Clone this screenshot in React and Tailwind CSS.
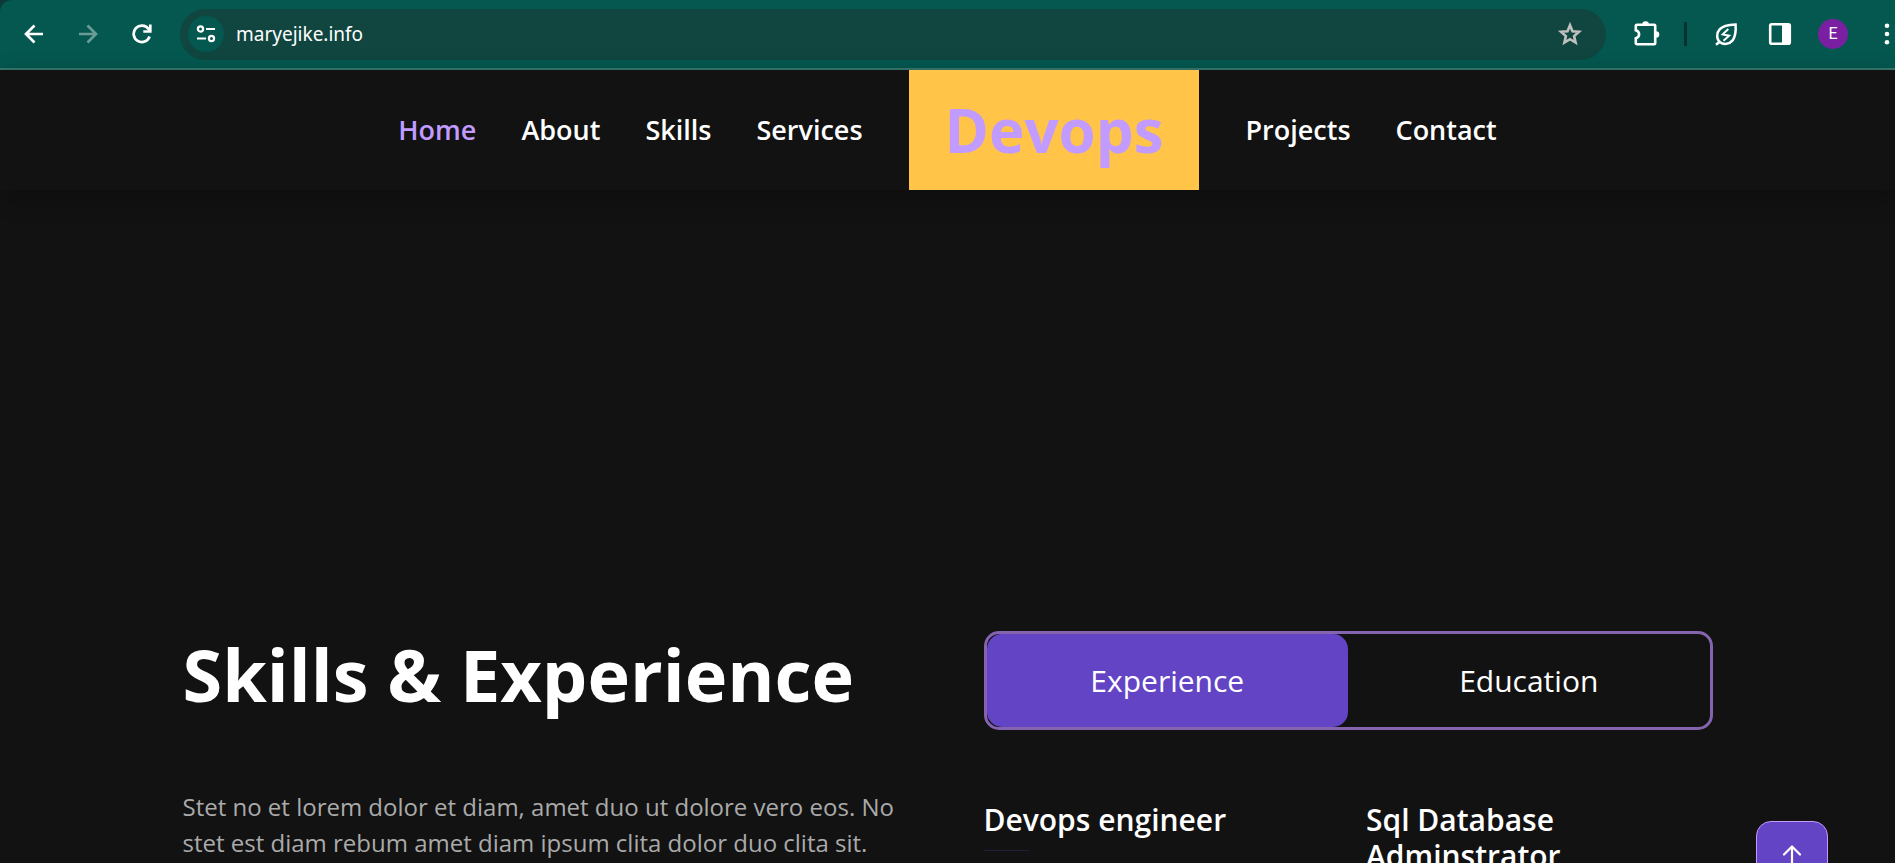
import React, { useState } from "react";

const leftLinks = ["Home", "About", "Skills", "Services"];
const rightLinks = ["Projects", "Contact"];

function IconButton({ label, className = "", children }) {
  return (
    <button type="button" aria-label={label} className={`flex h-9 w-9 shrink-0 items-center justify-center ${className}`}>
      {children}
    </button>
  );
}

function BrowserBar() {
  return (
    <div className="shrink-0 bg-[#0b3a38]">
      <div className="flex h-[70px] items-center rounded-tl-xl border-b-2 border-[#37786f] bg-[#045850] pl-4 text-white">
        <div className="flex shrink-0 gap-[18px]">
          <IconButton label="Back">
            <svg width="20" height="20" viewBox="0 0 20 20" fill="none" stroke="currentColor" strokeWidth="2.7">
              <path d="M19 10H2.5M10.5 1.5L2 10l8.500 8.500" />
            </svg>
          </IconButton>
          <IconButton label="Forward" className="text-[#6a9c96]">
            <svg width="20" height="20" viewBox="0 0 20 20" fill="none" stroke="currentColor" strokeWidth="2.7">
              <path d="M1 10h16.500M9.500 1.500L18 10l-8.500 8.500" />
            </svg>
          </IconButton>
          <IconButton label="Reload">
            <svg width="20" height="20" viewBox="0 0 20 20" fill="none" stroke="currentColor" strokeWidth="2.7">
              <path d="M17.600 12.500A8.200 8.200 0 1 1 16.500 5L18 7" />
              <path d="M18.300 0.500v7h-7" />
            </svg>
          </IconButton>
        </div>
        <div className="ml-5 flex h-[51px] min-w-0 flex-1 items-center rounded-full bg-[#10463f] pr-[18px] pl-2">
          <button
            type="button"
            aria-label="View site information"
            className="flex h-9 w-9 shrink-0 items-center justify-center rounded-full bg-[#045850]"
          >
            <svg width="20" height="18" viewBox="0 0 20 18" fill="none" stroke="currentColor" strokeWidth="2.200">
              <circle cx="4.500" cy="4" r="2.600" />
              <path d="M10 4h9M1 13.500h9" />
              <circle cx="15.500" cy="13.500" r="2.600" />
            </svg>
          </button>
          <input
            aria-label="Address"
            defaultValue="maryejike.info"
            className="ml-3 min-w-0 flex-1 bg-transparent font-['Noto_Sans',sans-serif] text-[19px] leading-7 outline-none"
          />
          <IconButton label="Bookmark this tab" className="text-[#c0c0c0]">
            <svg width="26" height="26" viewBox="0 0 26 26" fill="none" stroke="currentColor" strokeWidth="2.600">
              <path d="M13 4.200l2.500 6 6.500.6-4.900 4.300 1.500 6.500L13 18.200l-5.600 3.400 1.500-6.500L4 10.800l6.500-.6z" />
            </svg>
          </IconButton>
        </div>
        <div className="flex shrink-0 items-center pl-[22px]">
          <IconButton label="Extensions">
            <svg width="28" height="28" viewBox="0 0 28 28" fill="currentColor">
              <path
                d="M5 4.800h17a1.200 1.200 0 0 1 1.200 1.200v17a1.200 1.200 0 0 1-1.200 1.200H5A1.200 1.200 0 0 1 3.800 23v-4.700c4.400-1.300 4.400-6.800 0-8.100V6A1.200 1.200 0 0 1 5 4.800z"
                fill="none"
                stroke="currentColor"
                strokeWidth="2.600"
              />
              <path d="M10.300 4.500a3.300 3.300 0 0 1 6.600 0zM24 11.200a3.300 3.300 0 0 1 0 6.600z" />
            </svg>
          </IconButton>
          <span className="mr-[21px] ml-5 h-6 w-[3px] bg-[#04332f]" />
          <IconButton label="Energy saver">
            <svg width="26" height="26" viewBox="0 0 26 26" fill="none" stroke="currentColor" strokeWidth="2.500">
              <path d="M22.600 3.500c.5 7-.2 12.200-3 15.900-3.300 4-9 4.600-12.600 1.900C3.300 18 3.300 12 6.600 8.400 10 4.400 16 3.700 22.600 3.500z" />
              <path d="M7 20.500l-4 3.300" />
              <path d="M15.300 8l-5.600 5.400 6.400 1.300-5.600 5" strokeWidth="2" />
            </svg>
          </IconButton>
          <IconButton label="Side panel" className="ml-[18px]">
            <svg width="24" height="24" viewBox="0 0 24 24">
              <rect x="2.200" y="2.200" width="19.600" height="19.600" rx="1.500" fill="none" stroke="currentColor" strokeWidth="2.600" />
              <path d="M14 2h8v20h-8z" fill="currentColor" />
            </svg>
          </IconButton>
          <button
            type="button"
            aria-label="Profile"
            className="ml-5 flex h-[30px] w-[30px] items-center justify-center rounded-full bg-[#7b1fa2] font-[Roboto,sans-serif] text-[16px] leading-5"
          >
            E
          </button>
          <button type="button" aria-label="Menu" className="flex h-9 w-[47px] items-center justify-end pr-[5px]">
            <svg width="6" height="24" viewBox="0 0 6 24" fill="currentColor">
              <circle cx="3" cy="3.700" r="2.300" />
              <circle cx="3" cy="12" r="2.300" />
              <circle cx="3" cy="20.300" r="2.300" />
            </svg>
          </button>
        </div>
      </div>
    </div>
  );
}

function NavLink({ name }) {
  return (
    <a
      href={`#${name.toLowerCase()}`}
      className={name === "Home" ? "text-[#c19bff]" : "text-white"}
    >
      {name}
    </a>
  );
}

function Job({ title }) {
  return (
    <div>
      <h3 className="text-[30px] leading-9 font-semibold text-white">{title}</h3>
      <hr className="mt-3 w-[45px] border-[#241c3d]" />
    </div>
  );
}

export default function App() {
  const [tab, setTab] = useState("Experience");
  return (
    <div className="relative flex h-screen flex-col overflow-hidden bg-[#121212] font-['Open_Sans',sans-serif]">
      <BrowserBar />
      <nav className="flex h-[120px] shrink-0 items-center justify-center gap-[46px] text-[27px] leading-10 font-semibold shadow-[0_6px_24px_rgba(0,0,0,0.3)]">
        <div className="flex gap-[45px]">
          {leftLinks.map((name) => (
            <NavLink key={name} name={name} />
          ))}
        </div>
        <a href="#home" className="flex h-full items-center bg-[#ffc448] px-9 text-[60px] leading-[72px] font-bold text-[#c19bff]">
          Devops
        </a>
        <div className="flex gap-[45px]">
          {rightLinks.map((name) => (
            <NavLink key={name} name={name} />
          ))}
        </div>
      </nav>
      <main className="mx-auto grid w-full max-w-[1602px] grid-cols-2 gap-[72px] px-9 pt-[441px]">
        <section>
          <h1 className="mb-[72px] text-[72px] leading-[86px] font-bold text-white">Skills &amp; Experience</h1>
          <p className="text-[24px] leading-9 text-[#aaaaaa]">
            Stet no et lorem dolor et diam, amet duo ut dolore vero eos. No stet est diam rebum amet diam ipsum clita
            dolor duo clita sit.
          </p>
        </section>
        <section>
          <div role="tablist" className="mb-[72px] grid grid-cols-2 rounded-[15px] border-[3px] border-[#8463af]">
            {["Experience", "Education"].map((name) => (
              <button
                key={name}
                type="button"
                role="tab"
                aria-selected={tab === name}
                onClick={() => setTab(name)}
                className={`rounded-[15px] py-6 text-[30px] leading-[45px] text-white ${tab === name ? "bg-[#6244c5]" : ""}`}
              >
                {name}
              </button>
            ))}
          </div>
          <div className="grid grid-cols-2 gap-9">
            <Job title="Devops engineer" />
            <Job title="Sql Database Adminstrator" />
          </div>
        </section>
      </main>
      <a
        href="#home"
        aria-label="Back to top"
        className="absolute right-[67px] -bottom-[30px] flex h-[72px] w-[72px] items-center justify-center rounded-[15px] border border-[#c19bff] bg-[#6244c5] text-white"
      >
        <svg width="20" height="24" viewBox="0 0 20 24" fill="none" stroke="currentColor" strokeWidth="2.200" strokeLinecap="round" strokeLinejoin="round">
          <path d="M10 23V2M2 9.500L10 1.500l8 8" />
        </svg>
      </a>
    </div>
  );
}
